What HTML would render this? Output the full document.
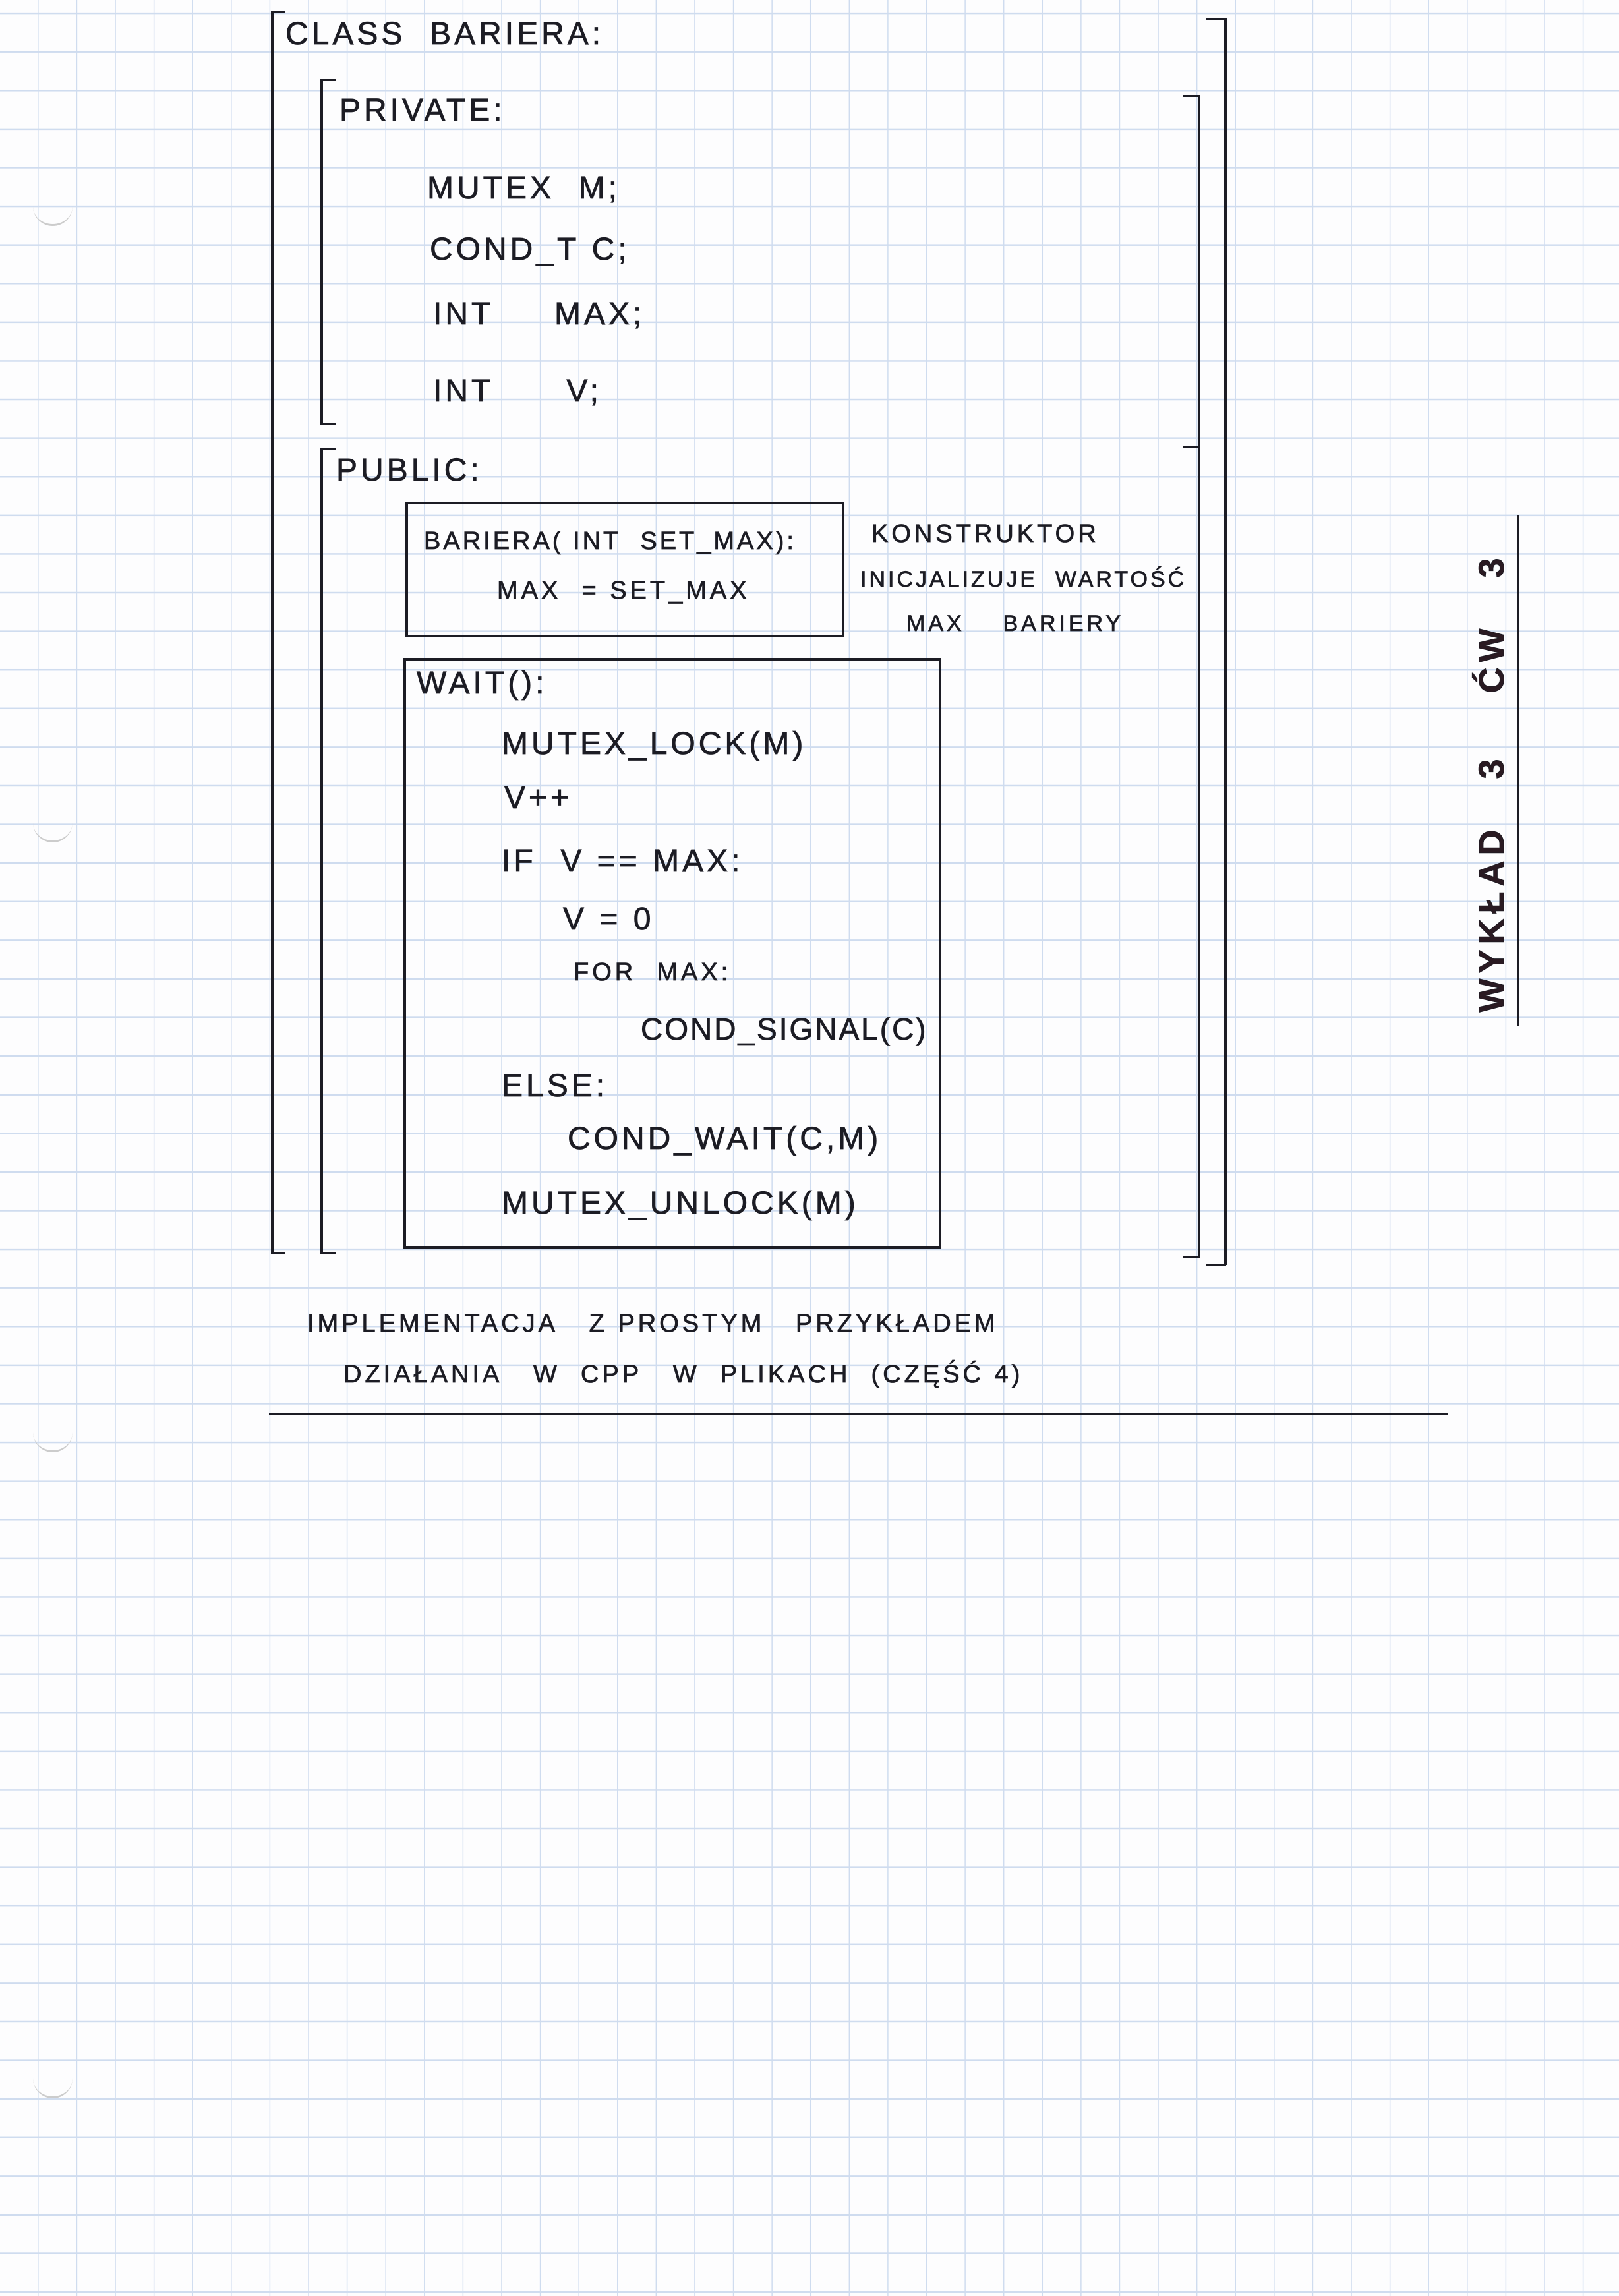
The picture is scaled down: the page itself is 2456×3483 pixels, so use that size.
<!DOCTYPE html>
<html><head><meta charset="utf-8"><style>
html,body{margin:0;padding:0}
body{width:2456px;height:3483px;position:relative;overflow:hidden;background-color:#fdfdfe;
background-image:
repeating-linear-gradient(to right, transparent 0, transparent 57px, #cfdcef 57px, #cfdcef 59.6px),
repeating-linear-gradient(to bottom, transparent 0, transparent 19px, #cfdcef 19px, #cfdcef 21.6px, transparent 21.6px, transparent 58.6px);
background-size:58.6px 100%, 100% 58.6px;background-position:0 0,0 0;}
.l{position:absolute;background:#1c1c24}
.t{position:absolute;font-family:"Liberation Sans",sans-serif;font-size:48px;color:#1c1c24;letter-spacing:5px;white-space:nowrap;line-height:1;font-weight:normal;-webkit-text-stroke:0.8px #1c1c24}
.s{font-size:38px}
.hole{position:absolute;left:50px;width:60px;height:40px;border-bottom:3px solid #ccc;border-radius:0 0 40px 40px}
</style></head><body>
<div class="l" style="left:411px;top:18px;width:5px;height:1884px"></div>
<div class="l" style="left:411px;top:16px;width:22px;height:4px"></div>
<div class="l" style="left:411px;top:1899px;width:22px;height:4px"></div>
<div class="t" style="left:433px;top:28px">CLASS&nbsp;&nbsp;BARIERA:</div>
<div class="l" style="left:1857px;top:27px;width:4px;height:1892px"></div>
<div class="l" style="left:1830px;top:27px;width:30px;height:3px"></div>
<div class="l" style="left:1830px;top:1917px;width:30px;height:3px"></div>
<div class="l" style="left:1817px;top:144px;width:4px;height:1764px"></div>
<div class="l" style="left:1795px;top:144px;width:24px;height:3px"></div>
<div class="l" style="left:1795px;top:676px;width:24px;height:3px"></div>
<div class="l" style="left:1795px;top:1906px;width:24px;height:3px"></div>
<div class="l" style="left:486px;top:122px;width:4px;height:522px"></div>
<div class="l" style="left:486px;top:120px;width:24px;height:3px"></div>
<div class="l" style="left:486px;top:641px;width:24px;height:3px"></div>
<div class="t" style="left:515px;top:144px">PRIVATE:</div>
<div class="t" style="left:648px;top:262px">MUTEX&nbsp;&nbsp;M;</div>
<div class="t" style="left:652px;top:355px">COND_T&nbsp;C;</div>
<div class="t" style="left:657px;top:453px">INT&nbsp;&nbsp;&nbsp;&nbsp;&nbsp;MAX;</div>
<div class="t" style="left:657px;top:570px">INT&nbsp;&nbsp;&nbsp;&nbsp;&nbsp;&nbsp;V;</div>
<div class="l" style="left:486px;top:681px;width:4px;height:1220px"></div>
<div class="l" style="left:486px;top:679px;width:24px;height:3px"></div>
<div class="l" style="left:486px;top:1899px;width:24px;height:3px"></div>
<div class="t" style="left:510px;top:690px">PUBLIC:</div>
<div style="position:absolute;left:615px;top:761px;width:658px;height:198px;border:4px solid #1c1c24"></div>
<div class="t s" style="left:643px;top:802px;letter-spacing:4px">BARIERA( INT&nbsp;&nbsp;SET_MAX):</div>
<div class="t s" style="left:754px;top:877px">MAX&nbsp;&nbsp;=&nbsp;SET_MAX</div>
<div class="t s" style="left:1322px;top:791px">KONSTRUKTOR</div>
<div class="t s" style="left:1305px;top:862px;font-size:34px;letter-spacing:4px">INICJALIZUJE&nbsp;&nbsp;WARTOŚĆ</div>
<div class="t s" style="left:1375px;top:929px;font-size:34px">MAX&nbsp;&nbsp;&nbsp;&nbsp;BARIERY</div>
<div style="position:absolute;left:612px;top:998px;width:808px;height:888px;border:4px solid #1c1c24"></div>
<div class="t" style="left:632px;top:1013px">WAIT():</div>
<div class="t" style="left:761px;top:1105px">MUTEX_LOCK(M)</div>
<div class="t" style="left:765px;top:1187px">V++</div>
<div class="t" style="left:761px;top:1283px">IF&nbsp;&nbsp;V&nbsp;==&nbsp;MAX:</div>
<div class="t" style="left:854px;top:1371px">V&nbsp;=&nbsp;0</div>
<div class="t s" style="left:870px;top:1456px">FOR&nbsp;&nbsp;MAX:</div>
<div class="t" style="left:972px;top:1538px;letter-spacing:3px;font-size:46px">COND_SIGNAL(C)</div>
<div class="t" style="left:761px;top:1624px">ELSE:</div>
<div class="t" style="left:861px;top:1704px">COND_WAIT(C,M)</div>
<div class="t" style="left:761px;top:1802px">MUTEX_UNLOCK(M)</div>
<div class="t s" style="left:466px;top:1989px">IMPLEMENTACJA&nbsp;&nbsp;&nbsp;Z&nbsp;PROSTYM&nbsp;&nbsp;&nbsp;PRZYKŁADEM</div>
<div class="t s" style="left:521px;top:2066px">DZIAŁANIA&nbsp;&nbsp;&nbsp;W&nbsp;&nbsp;CPP&nbsp;&nbsp;&nbsp;W&nbsp;&nbsp;PLIKACH&nbsp;&nbsp;(CZĘŚĆ 4)</div>
<div class="l" style="left:408px;top:2143px;width:1788px;height:3px"></div>
<div class="l" style="left:2302px;top:781px;width:3px;height:776px"></div>
<div class="t" style="left:1863px;top:1160px;width:800px;transform:rotate(-90deg);transform-origin:center;font-size:54px;letter-spacing:8px;font-weight:bold;color:#2a1a22;text-align:center">WYKŁAD&nbsp;&nbsp;&nbsp;3&nbsp;&nbsp;&nbsp;&nbsp;ĆW&nbsp;&nbsp;&nbsp;3</div>
<div class="hole" style="top:300px"></div>
<div class="hole" style="top:1235px"></div>
<div class="hole" style="top:2160px"></div>
<div class="hole" style="top:3140px"></div>
</body></html>
